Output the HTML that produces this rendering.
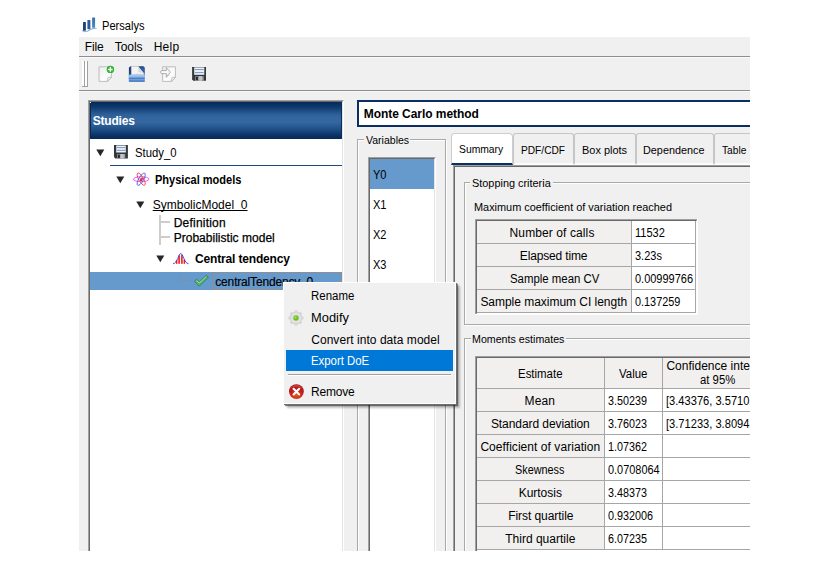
<!DOCTYPE html>
<html>
<head>
<meta charset="utf-8">
<title>Persalys</title>
<style>
html,body{margin:0;padding:0;background:#fff;}
body{width:828px;height:566px;overflow:hidden;position:relative;font-family:"Liberation Sans",sans-serif;}
#app{position:absolute;left:79px;top:0;width:671px;height:551px;overflow:hidden;}
#in{position:absolute;left:-79px;top:0;width:828px;height:566px;}
.a{position:absolute;}
.t{position:absolute;white-space:nowrap;line-height:20px;height:20px;font-family:"Liberation Sans",sans-serif;display:inline-block;transform-origin:0 50%;}
.g{background:#f0f0f0;}
.hl{position:absolute;height:1px;}
.vl{position:absolute;width:1px;}
.cellh{position:absolute;background:#f1f0ef;}
.cellw{position:absolute;background:#fff;}
</style>
</head>
<body>
<div id="app"><div id="in">

<!-- menubar / toolbar / main background -->
<div class="a g" style="left:79px;top:37px;width:671px;height:514px;"></div>
<div class="hl" style="left:79px;top:56px;width:671px;background:#8e8e8e;"></div>
<div class="hl" style="left:79px;top:57px;width:671px;background:#fbfbfb;"></div>
<div class="hl" style="left:79px;top:90px;width:671px;background:#8e8e8e;"></div>
<div class="hl" style="left:79px;top:91px;width:671px;background:#f8f8f8;"></div>

<!-- title icon -->
<svg class="a" style="left:82px;top:16px;" width="18" height="18" viewBox="0 0 18 18">
  <defs>
    <linearGradient id="tb3" x1="0" y1="0" x2="0" y2="1"><stop offset="0" stop-color="#3a6fab"/><stop offset="1" stop-color="#4f88c2"/></linearGradient>
    <linearGradient id="tb2" x1="0" y1="0" x2="0" y2="1"><stop offset="0" stop-color="#2c5d9c"/><stop offset="1" stop-color="#2a5a98"/></linearGradient>
  </defs>
  <path d="M0.2 14.4 L2.6 15.7 L5.4 15.2 L8.6 13.6 L11 12.6 L14.6 12.3" stroke="#8fb4da" stroke-width="1.1" fill="none"/>
  <rect x="1" y="6.1" width="2.9" height="8.6" rx="0.5" fill="#1b447f"/>
  <rect x="5.4" y="3.9" width="3" height="9.3" rx="0.5" fill="url(#tb2)"/>
  <rect x="10.1" y="1.4" width="3" height="10.3" rx="0.5" fill="url(#tb3)"/>
</svg>

<!-- toolbar handle -->
<div class="a" style="left:82px;top:61px;width:2px;height:26px;background:#fff;border-right:1px solid #a0a0a0;border-bottom:1px solid #a0a0a0;box-sizing:border-box;width:3px;"></div>
<div class="a" style="left:85px;top:61px;height:26px;background:#fff;border-right:1px solid #a0a0a0;border-bottom:1px solid #a0a0a0;box-sizing:border-box;width:3px;"></div>

<!-- toolbar icons -->
<!-- new -->
<svg class="a" style="left:97px;top:65px;" width="18" height="18" viewBox="0 0 18 18">
  <defs><linearGradient id="pg" x1="0" y1="0" x2="1" y2="1"><stop offset="0" stop-color="#ececec"/><stop offset="0.6" stop-color="#fdfdfd"/><stop offset="1" stop-color="#f1f1f1"/></linearGradient></defs>
  <path d="M2 1.8 H14.4 V12.4 L10.6 16.4 H2 Z" fill="url(#pg)" stroke="#bdbdbd" stroke-width="1"/>
  <path d="M14.4 12.4 C12.8 12.2 11.4 12.4 10.8 12.8 C10.9 14 10.8 15.2 10.6 16.4 Z" fill="#fafafa" stroke="#b4b4b4" stroke-width="0.9"/>
  <circle cx="13.4" cy="4.4" r="3.7" fill="#1ea81e"/>
  <circle cx="13.4" cy="4.4" r="3.1" fill="none" stroke="#4cc84c" stroke-width="0.6"/>
  <path d="M13.4 2.1 V6.7 M11.1 4.4 H15.7" stroke="#fff" stroke-width="1.5"/>
</svg>
<!-- open -->
<svg class="a" style="left:128px;top:65px;" width="18" height="18" viewBox="0 0 18 18">
  <path d="M0.9 2.4 L2.6 1.3 H15.4 L16.6 2.6 V11 H0.9 Z" fill="#1b3f7c"/>
  <path d="M3.4 1.3 H10 L15.7 8 V11 H3.4 Z" fill="#f4f4f4"/>
  <path d="M3.4 1.3 H10 L15.7 8 V11 H3.4 Z" fill="none" stroke="#cdcdcd" stroke-width="0.7"/>
  <path d="M10 1.3 L10.3 7.3 L15.7 8 Z" fill="#dcdcdc"/>
  <path d="M11.4 2.4 H16.4 V8.2 Z" fill="#2d5fa8"/>
  <path d="M3.4 9.4 L9 8.2 L15.7 9 V11 H3.4 Z" fill="#dfe3ea"/>
  <rect x="0.8" y="9.7" width="16" height="7" rx="0.9" fill="#6f9ed9"/>
  <rect x="0.8" y="9.7" width="16" height="2.1" rx="0.6" fill="#a3c5ec"/>
  <rect x="0.8" y="13" width="16" height="1" fill="#4e80c4"/>
  <rect x="0.8" y="15.6" width="16" height="1.1" rx="0.5" fill="#4376bc"/>
</svg>
<!-- import -->
<svg class="a" style="left:159px;top:65px;" width="18" height="18" viewBox="0 0 18 18">
  <path d="M3.6 1.8 H16.4 V12.4 L12.6 16.4 H3.6 Z" fill="url(#pg)" stroke="#bdbdbd" stroke-width="1"/>
  <path d="M16.4 12.4 C14.8 12.2 13.4 12.4 12.8 12.8 C12.9 14 12.8 15.2 12.6 16.4 Z" fill="#fafafa" stroke="#b4b4b4" stroke-width="0.9"/>
  <path d="M2.4 5.6 H7.4 V2.8 L11.4 7.1 L7.4 11.6 V8.6 H2.4 C1.5 8.6 1.5 5.6 2.4 5.6 Z" fill="#fbfbfb" stroke="#a4a4a4" stroke-width="0.9"/>
  <path d="M6.4 11 L7.6 12.6 L10.4 9.6" fill="none" stroke="#c8c8c8" stroke-width="0.9"/>
</svg>
<!-- save -->
<svg class="a" style="left:190px;top:65px;" width="18" height="18" viewBox="0 0 18 18">
  <path d="M2 1.9 H16 V15.8 H3.4 L2 14.4 Z" fill="#34373a"/>
  <path d="M2.6 2.5 V14.2 L3.7 15.2" stroke="#55595d" stroke-width="0.7" fill="none"/>
  <rect x="4.2" y="2.4" width="10.1" height="7.4" fill="#eef3fa"/>
  <rect x="4.8" y="4" width="8.9" height="1.1" fill="#7d9fcc"/>
  <rect x="4.8" y="7" width="8.9" height="1.1" fill="#7d9fcc"/>
  <rect x="5.2" y="11.2" width="8.5" height="4.6" fill="#9b9fa3"/>
  <rect x="9" y="11.2" width="3" height="4.6" fill="#c2c5c8"/>
  <rect x="5.9" y="11.8" width="2" height="3.3" fill="#26282a"/>
</svg>

<!-- ============ Studies tree panel ============ -->
<div class="a" style="left:88px;top:100px;width:256px;height:460px;background:#fff;box-sizing:border-box;border-left:1px solid #a0a0a0;border-top:1px solid #a0a0a0;border-right:1px solid #fff;"></div>
<div class="a" style="left:89px;top:101px;width:254px;height:460px;background:#fff;box-sizing:border-box;border-left:1px solid #696969;border-top:1px solid #696969;border-right:1px solid #e3e3e3;"></div>
<div class="a" style="left:90px;top:102px;width:252px;height:37px;background:linear-gradient(to bottom,#05295c 0%,#0e376b 13%,#2c5f97 33%,#34679f 43%,#34679f 55%,#1f4e86 74%,#0b3366 90%,#05295c 100%);"></div>
<div class="vl" style="left:90px;top:102px;height:37px;background:#05295c;"></div>
<div class="vl" style="left:341px;top:102px;height:37px;background:#08305f;"></div>
<div class="a" style="left:90px;top:102px;width:1px;height:1px;background:#fff;"></div>
<!-- study underline -->
<div class="hl" style="left:110px;top:165px;width:232px;background:#1c4a80;"></div>

<!-- tree arrows -->
<svg class="a" style="left:96px;top:149px;" width="9" height="8" viewBox="0 0 9 8"><path d="M0.3 0.6 H8.3 L4.3 7.2 Z" fill="#262626"/></svg>
<svg class="a" style="left:116px;top:176px;" width="9" height="8" viewBox="0 0 9 8"><path d="M0.3 0.6 H8.3 L4.3 7.2 Z" fill="#262626"/></svg>
<svg class="a" style="left:136px;top:201px;" width="9" height="8" viewBox="0 0 9 8"><path d="M0.3 0.6 H8.3 L4.3 7.2 Z" fill="#262626"/></svg>
<svg class="a" style="left:156px;top:255px;" width="9" height="8" viewBox="0 0 9 8"><path d="M0.3 0.6 H8.3 L4.3 7.2 Z" fill="#262626"/></svg>

<!-- study floppy icon -->
<svg class="a" style="left:113px;top:144px;" width="16" height="16" viewBox="0 0 16 16">
  <path d="M1 1 H14.9 V14.5 H2.4 L1 13.1 Z" fill="#34373a"/>
  <rect x="3.2" y="1.5" width="9.6" height="7" fill="#eef3fa"/>
  <rect x="3.7" y="3" width="8.6" height="1.1" fill="#7d9fcc"/>
  <rect x="3.7" y="5.8" width="8.6" height="1.1" fill="#7d9fcc"/>
  <rect x="4.2" y="10" width="8" height="4.5" fill="#9b9fa3"/>
  <rect x="7.6" y="10" width="3" height="4.5" fill="#c2c5c8"/>
  <rect x="4.9" y="10.6" width="2" height="3.3" fill="#26282a"/>
</svg>

<!-- atom icon -->
<svg class="a" style="left:132px;top:171px;" width="18" height="17" viewBox="0 0 18 17">
  <g fill="none" stroke-width="0.85">
    <ellipse cx="9.2" cy="8.2" rx="7.7" ry="2.5" stroke="#ee3fe0"/>
    <ellipse cx="9.2" cy="8.2" rx="7" ry="2.4" stroke="#f0405c" transform="rotate(60 9.2 8.2)"/>
    <ellipse cx="9.2" cy="8.2" rx="7" ry="2.4" stroke="#5555f2" transform="rotate(120 9.2 8.2)"/>
  </g>
  <circle cx="8.4" cy="7.6" r="1.2" fill="#7fd8e8"/>
  <circle cx="10" cy="7.6" r="1.2" fill="#e8482a"/>
  <circle cx="9.2" cy="9" r="1.3" fill="#e02a3a"/>
</svg>

<!-- tree branch lines -->
<div class="a" style="left:159.1px;top:215px;width:2px;height:30px;background:#d0cdc9;"></div>
<div class="a" style="left:160px;top:221.2px;width:9.6px;height:1.6px;background:#d0cdc9;"></div>
<div class="a" style="left:160px;top:236.2px;width:9.6px;height:1.6px;background:#d0cdc9;"></div>

<!-- central tendency icon -->
<svg class="a" style="left:172px;top:252px;" width="18" height="14" viewBox="0 0 18 14">
  <g fill="#f21c1c">
    <rect x="3.9" y="8.2" width="1.5" height="3.6"/>
    <rect x="6.3" y="3.4" width="1.6" height="8.4"/>
    <rect x="9.1" y="3" width="1.6" height="8.8"/>
    <rect x="11.6" y="7.6" width="1.5" height="4.2"/>
  </g>
  <path d="M1 11.8 C5.4 11.4 6.6 1.5 8.8 1.5 C11 1.5 12.2 11.4 16.6 11.8" fill="none" stroke="#3c3ce0" stroke-width="0.9"/>
</svg>

<!-- selected row -->
<div class="a" style="left:90px;top:272px;width:252px;height:18px;background:#6699cc;"></div>
<div class="a" style="left:179.5px;top:272px;width:1px;height:9px;background:#7a90b0;"></div>
<div class="a" style="left:179.5px;top:280px;width:10.5px;height:1px;background:#7a90b0;"></div>
<!-- focus rect -->
<div class="a" style="left:212px;top:272px;width:130px;height:18px;box-sizing:border-box;border:1px dotted #b8835a;"></div>
<!-- check icon -->
<svg class="a" style="left:193px;top:274px;" width="17" height="14" viewBox="0 0 17 14">
  <path d="M1.4 7.2 L3.6 5.2 L6.2 7.8 L13.2 1.4 L15.4 3.4 L6.2 12.2 Z" fill="#55b373" stroke="#2f8048" stroke-width="0.8" stroke-linejoin="round"/>
  <path d="M3.6 6.4 L6.2 9 L13.2 2.6" fill="none" stroke="#9fe0b2" stroke-width="0.9"/>
</svg>

<!-- ============ Right panel ============ -->
<div class="a" style="left:357px;top:100px;width:420px;height:27px;box-sizing:border-box;border:2px solid #0a2e64;background:#fff;"></div>

<!-- variables group box -->
<div class="a" style="left:358px;top:140px;width:89px;height:430px;box-sizing:border-box;border:1px solid #fff;"></div>
<div class="a" style="left:357px;top:139px;width:89px;height:430px;box-sizing:border-box;border:1px solid #a9a9a9;"></div>
<div class="a g" style="left:364px;top:134px;width:46px;height:14px;"></div>
<!-- list box -->
<div class="a" style="left:368px;top:157px;width:68px;height:410px;box-sizing:border-box;border-left:1px solid #a0a0a0;border-top:1px solid #a0a0a0;border-right:1px solid #fff;background:#fff;"></div>
<div class="a" style="left:369px;top:158px;width:66px;height:410px;box-sizing:border-box;border-left:1px solid #696969;border-top:1px solid #696969;border-right:1px solid #e3e3e3;background:#fff;"></div>
<div class="a" style="left:370px;top:159px;width:64px;height:30px;background:#6699cc;"></div>

<!-- tab pane -->
<div class="a" style="left:453px;top:165px;width:320px;height:410px;box-sizing:border-box;border-left:1px solid #a0a0a0;border-top:1px solid #a0a0a0;"></div>
<div class="a" style="left:454px;top:166px;width:320px;height:410px;box-sizing:border-box;border-left:1px solid #696969;border-top:1px solid #696969;"></div>

<!-- tabs -->
<div class="a" style="left:513px;top:133px;width:61px;height:32px;box-sizing:border-box;border:1px solid #c6c6c6;border-bottom:2px solid #fbfbfb;border-radius:3px 3px 0 0;background:#f0f0f0;"></div>
<div class="a" style="left:574px;top:133px;width:62px;height:32px;box-sizing:border-box;border:1px solid #c6c6c6;border-bottom:2px solid #fbfbfb;border-radius:3px 3px 0 0;background:#f0f0f0;"></div>
<div class="a" style="left:636px;top:133px;width:78px;height:32px;box-sizing:border-box;border:1px solid #c6c6c6;border-bottom:2px solid #fbfbfb;border-radius:3px 3px 0 0;background:#f0f0f0;"></div>
<div class="a" style="left:714px;top:133px;width:60px;height:32px;box-sizing:border-box;border:1px solid #c6c6c6;border-bottom:2px solid #fbfbfb;border-radius:3px 3px 0 0;background:#f0f0f0;"></div>
<div class="a" style="left:451px;top:133px;width:62px;height:32px;box-sizing:border-box;border:1px solid #cdcdcd;border-bottom:2px solid #0a2e64;border-radius:4px 4px 0 0;background:#fff;"></div>

<!-- stopping criteria group -->
<div class="a" style="left:465px;top:183px;width:320px;height:143px;box-sizing:border-box;border:1px solid #fff;"></div>
<div class="a" style="left:464px;top:182px;width:320px;height:143px;box-sizing:border-box;border:1px solid #a9a9a9;"></div>
<div class="a g" style="left:470px;top:176px;width:83px;height:14px;"></div>

<!-- table 1 -->
<div class="a" style="left:475px;top:219px;width:223px;height:96px;background:#fff;"></div>
<div class="a" style="left:475px;top:219px;width:222px;height:95px;background:#a0a0a0;"></div>
<div class="a" style="left:476px;top:220px;width:220px;height:93px;background:#696969;"></div>
<div class="a" style="left:477px;top:221px;width:219px;height:92px;background:#a6a6a6;"></div>
<div class="a" style="left:696px;top:221px;width:2px;height:94px;background:#fdfdfd;"></div>
<div class="a" style="left:477px;top:313px;width:221px;height:2px;background:#fdfdfd;"></div>
<div class="cellh" style="left:477px;top:221px;width:154px;height:22px;"></div>
<div class="cellh" style="left:477px;top:244px;width:154px;height:22px;"></div>
<div class="cellh" style="left:477px;top:267px;width:154px;height:22px;"></div>
<div class="cellh" style="left:477px;top:290px;width:154px;height:22px;"></div>
<div class="cellw" style="left:632px;top:221px;width:63px;height:22px;"></div>
<div class="cellw" style="left:632px;top:244px;width:63px;height:22px;"></div>
<div class="cellw" style="left:632px;top:267px;width:63px;height:22px;"></div>
<div class="cellw" style="left:632px;top:290px;width:63px;height:22px;"></div>

<!-- moments group -->
<div class="a" style="left:465px;top:339px;width:320px;height:239px;box-sizing:border-box;border:1px solid #fff;"></div>
<div class="a" style="left:464px;top:338px;width:320px;height:239px;box-sizing:border-box;border:1px solid #a9a9a9;"></div>
<div class="a g" style="left:471px;top:331px;width:95px;height:14px;"></div>

<!-- table 2 -->
<div class="a" style="left:475px;top:356px;width:300px;height:210px;background:#a0a0a0;"></div>
<div class="a" style="left:476px;top:357px;width:300px;height:210px;background:#696969;"></div>
<div class="a" style="left:477px;top:358px;width:300px;height:210px;background:#fff;"></div>
<div class="a" style="left:477px;top:358px;width:300px;height:192px;background:#a6a6a6;"></div>
<div class="cellh" style="left:477px;top:358px;width:127px;height:30px;"></div>
<div class="cellh" style="left:605px;top:358px;width:57px;height:30px;"></div>
<div class="cellh" style="left:663px;top:358px;width:112px;height:30px;"></div>
<div class="cellh" style="left:477px;top:389px;width:127px;height:22px;"></div>
<div class="cellw" style="left:605px;top:389px;width:57px;height:22px;"></div>
<div class="cellw" style="left:663px;top:389px;width:112px;height:22px;"></div>
<div class="cellh" style="left:477px;top:412px;width:127px;height:22px;"></div>
<div class="cellw" style="left:605px;top:412px;width:57px;height:22px;"></div>
<div class="cellw" style="left:663px;top:412px;width:112px;height:22px;"></div>
<div class="cellh" style="left:477px;top:435px;width:127px;height:22px;"></div>
<div class="cellw" style="left:605px;top:435px;width:57px;height:22px;"></div>
<div class="cellw" style="left:663px;top:435px;width:112px;height:22px;"></div>
<div class="cellh" style="left:477px;top:458px;width:127px;height:22px;"></div>
<div class="cellw" style="left:605px;top:458px;width:57px;height:22px;"></div>
<div class="cellw" style="left:663px;top:458px;width:112px;height:22px;"></div>
<div class="cellh" style="left:477px;top:481px;width:127px;height:22px;"></div>
<div class="cellw" style="left:605px;top:481px;width:57px;height:22px;"></div>
<div class="cellw" style="left:663px;top:481px;width:112px;height:22px;"></div>
<div class="cellh" style="left:477px;top:504px;width:127px;height:22px;"></div>
<div class="cellw" style="left:605px;top:504px;width:57px;height:22px;"></div>
<div class="cellw" style="left:663px;top:504px;width:112px;height:22px;"></div>
<div class="cellh" style="left:477px;top:527px;width:127px;height:22px;"></div>
<div class="cellw" style="left:605px;top:527px;width:57px;height:22px;"></div>
<div class="cellw" style="left:663px;top:527px;width:112px;height:22px;"></div>

<span class="t" style="left:101.8px;top:16.0px;font-size:12px;font-weight:400;color:#000;transform:scaleX(0.9236);">Persalys</span>
<span class="t" style="left:84.7px;top:37.0px;font-size:12px;font-weight:400;color:#000;letter-spacing:-0.086px;">File</span>
<span class="t" style="left:114.8px;top:37.0px;font-size:12px;font-weight:400;color:#000;letter-spacing:-0.083px;">Tools</span>
<span class="t" style="left:153.7px;top:37.0px;font-size:12px;font-weight:400;color:#000;letter-spacing:0.253px;">Help</span>
<span class="t" style="left:92.8px;top:111.0px;font-size:12px;font-weight:700;color:#fff;letter-spacing:-0.221px;">Studies</span>
<span class="t" style="left:134.9px;top:143.0px;font-size:12px;font-weight:400;color:#000;transform:scaleX(0.9422);">Study_0</span>
<span class="t" style="left:155.0px;top:170.0px;font-size:12px;font-weight:700;color:#000;transform:scaleX(0.9187);">Physical models</span>
<span class="t" style="left:152.7px;top:195.0px;font-size:12px;font-weight:400;color:#000;text-decoration:underline;text-decoration-skip-ink:none;letter-spacing:0.005px;">SymbolicModel  0</span>
<span class="t" style="left:173.7px;top:213.0px;font-size:12px;font-weight:400;color:#000;-webkit-text-stroke:0.25px #000;letter-spacing:0.217px;">Definition</span>
<span class="t" style="left:173.7px;top:228.0px;font-size:12px;font-weight:400;color:#000;-webkit-text-stroke:0.25px #000;letter-spacing:0.020px;">Probabilistic model</span>
<span class="t" style="left:195.1px;top:249.0px;font-size:12px;font-weight:700;color:#000;letter-spacing:-0.172px;">Central tendency</span>
<span class="t" style="left:215.3px;top:272.0px;font-size:12px;font-weight:400;color:#000;-webkit-text-stroke:0.15px #000;letter-spacing:-0.173px;">centralTendency_0</span>
<span class="t" style="left:363.8px;top:104.0px;font-size:12px;font-weight:700;color:#000;letter-spacing:-0.056px;">Monte Carlo method</span>
<span class="t" style="left:365.5px;top:130.0px;font-size:11.5px;font-weight:400;color:#000;transform:scaleX(0.9152);">Variables</span>
<span class="t" style="left:373.1px;top:165.0px;font-size:12.5px;font-weight:400;color:#000;transform:scaleX(0.8825);">Y0</span>
<span class="t" style="left:373.1px;top:195.0px;font-size:12.5px;font-weight:400;color:#000;transform:scaleX(0.8825);">X1</span>
<span class="t" style="left:373.1px;top:225.0px;font-size:12.5px;font-weight:400;color:#000;transform:scaleX(0.8825);">X2</span>
<span class="t" style="left:373.1px;top:255.0px;font-size:12.5px;font-weight:400;color:#000;transform:scaleX(0.8825);">X3</span>
<span class="t" style="left:459.2px;top:139.0px;font-size:11.5px;font-weight:400;color:#000;transform:scaleX(0.8983);">Summary</span>
<span class="t" style="left:520.9px;top:140.0px;font-size:11.5px;font-weight:400;color:#000;transform:scaleX(0.8828);">PDF/CDF</span>
<span class="t" style="left:581.6px;top:140.0px;font-size:11.5px;font-weight:400;color:#000;transform:scaleX(0.9511);">Box plots</span>
<span class="t" style="left:643.1px;top:140.0px;font-size:11.5px;font-weight:400;color:#000;transform:scaleX(0.9428);">Dependence</span>
<span class="t" style="left:722.3px;top:140.0px;font-size:11.5px;font-weight:400;color:#000;transform:scaleX(0.8836);">Table</span>
<span class="t" style="left:471.8px;top:173.0px;font-size:11.5px;font-weight:400;color:#000;transform:scaleX(0.9469);">Stopping criteria</span>
<span class="t" style="left:474.0px;top:197.0px;font-size:11.5px;font-weight:400;color:#000;transform:scaleX(0.9482);">Maximum coefficient of variation reached</span>
<span class="t" style="left:509.6px;top:223.0px;font-size:12px;font-weight:400;color:#000;letter-spacing:0.102px;">Number of calls</span>
<span class="t" style="left:519.8px;top:246.0px;font-size:12px;font-weight:400;color:#000;letter-spacing:-0.148px;">Elapsed time</span>
<span class="t" style="left:509.6px;top:269.0px;font-size:12px;font-weight:400;color:#000;transform:scaleX(0.9506);">Sample mean CV</span>
<span class="t" style="left:480.4px;top:292.0px;font-size:12px;font-weight:400;color:#000;letter-spacing:-0.029px;">Sample maximum CI length</span>
<span class="t" style="left:635.0px;top:223.0px;font-size:12px;font-weight:400;color:#000;transform:scaleX(0.9204);">11532</span>
<span class="t" style="left:635.0px;top:246.0px;font-size:12px;font-weight:400;color:#000;transform:scaleX(0.9162);">3.23s</span>
<span class="t" style="left:635.0px;top:269.0px;font-size:12px;font-weight:400;color:#000;transform:scaleX(0.9147);">0.00999766</span>
<span class="t" style="left:634.9px;top:292.0px;font-size:12px;font-weight:400;color:#000;transform:scaleX(0.9049);">0.137259</span>
<span class="t" style="left:472.2px;top:329.0px;font-size:11.5px;font-weight:400;color:#000;transform:scaleX(0.9268);">Moments estimates</span>
<span class="t" style="left:518.2px;top:364.0px;font-size:12px;font-weight:400;color:#000;transform:scaleX(0.9531);">Estimate</span>
<span class="t" style="left:619.0px;top:364.0px;font-size:12px;font-weight:400;color:#000;transform:scaleX(0.9526);">Value</span>
<span class="t" style="left:666.4px;top:356.0px;font-size:12px;font-weight:400;color:#000;letter-spacing:0.017px;">Confidence interval</span>
<span class="t" style="left:699.8px;top:370.0px;font-size:12px;font-weight:400;color:#000;transform:scaleX(0.9449);">at 95%</span>
<span class="t" style="left:524.6px;top:391.0px;font-size:12px;font-weight:400;color:#000;letter-spacing:0.142px;">Mean</span>
<span class="t" style="left:490.9px;top:414.0px;font-size:12px;font-weight:400;color:#000;letter-spacing:-0.071px;">Standard deviation</span>
<span class="t" style="left:480.4px;top:437.0px;font-size:12px;font-weight:400;color:#000;letter-spacing:0.054px;">Coefficient of variation</span>
<span class="t" style="left:515.2px;top:460.0px;font-size:12px;font-weight:400;color:#000;transform:scaleX(0.9031);">Skewness</span>
<span class="t" style="left:518.7px;top:483.0px;font-size:12px;font-weight:400;color:#000;letter-spacing:-0.020px;">Kurtosis</span>
<span class="t" style="left:508.2px;top:506.0px;font-size:12px;font-weight:400;color:#000;letter-spacing:-0.059px;">First quartile</span>
<span class="t" style="left:505.2px;top:529.0px;font-size:12px;font-weight:400;color:#000;letter-spacing:0.012px;">Third quartile</span>
<span class="t" style="left:607.8px;top:391.0px;font-size:12px;font-weight:400;color:#000;transform:scaleX(0.8988);">3.50239</span>
<span class="t" style="left:607.8px;top:414.0px;font-size:12px;font-weight:400;color:#000;transform:scaleX(0.8988);">3.76023</span>
<span class="t" style="left:607.8px;top:437.0px;font-size:12px;font-weight:400;color:#000;transform:scaleX(0.8988);">1.07362</span>
<span class="t" style="left:607.8px;top:460.0px;font-size:12px;font-weight:400;color:#000;transform:scaleX(0.9095);">0.0708064</span>
<span class="t" style="left:607.8px;top:483.0px;font-size:12px;font-weight:400;color:#000;transform:scaleX(0.8988);">3.48373</span>
<span class="t" style="left:607.8px;top:506.0px;font-size:12px;font-weight:400;color:#000;transform:scaleX(0.9009);">0.932006</span>
<span class="t" style="left:607.8px;top:529.0px;font-size:12px;font-weight:400;color:#000;transform:scaleX(0.8988);">6.07235</span>
<span class="t" style="left:666.4px;top:391.0px;font-size:12px;font-weight:400;color:#000;transform:scaleX(0.9261);">[3.43376, 3.57102]</span>
<span class="t" style="left:666.4px;top:414.0px;font-size:12px;font-weight:400;color:#000;transform:scaleX(0.9261);">[3.71233, 3.80948]</span>

</div></div>

<!-- ============ Context menu (may overflow app) ============ -->
<div class="a" style="left:283px;top:282px;width:173px;height:122px;background:#f0f0f0;box-sizing:border-box;border:1px solid #fff;border-left:1.5px solid #fff;border-top:1.5px solid #fff;box-shadow:1px 1px 0 #6e6e6e, 2px 2px 1px rgba(0,0,0,0.45), 4px 4px 2px rgba(0,0,0,0.25);"></div>
<div class="a" style="left:286px;top:350px;width:167px;height:21px;background:#0078d7;"></div>
<div class="hl" style="left:288px;top:374px;width:163px;background:#a0a0a0;"></div>
<div class="hl" style="left:288px;top:375px;width:163px;background:#fff;"></div>
<!-- modify icon -->
<svg class="a" style="left:287px;top:309px;" width="18" height="18" viewBox="0 0 18 18">
  <g fill="#d6d6d6">
    <circle cx="9" cy="9" r="6.3"/>
    <rect x="7.5" y="1.3" width="3" height="15.4" rx="1"/>
    <rect x="1.3" y="7.5" width="15.4" height="3" ry="1"/>
    <rect x="7.5" y="1.3" width="3" height="15.4" rx="1" transform="rotate(45 9 9)"/>
    <rect x="7.5" y="1.3" width="3" height="15.4" rx="1" transform="rotate(-45 9 9)"/>
  </g>
  <circle cx="9" cy="9" r="4.7" fill="#e9e9e9"/>
  <circle cx="9" cy="9" r="3.6" fill="#dedede"/>
  <circle cx="9" cy="9" r="2.7" fill="#72c022"/>
  <circle cx="8.5" cy="8.4" r="1.1" fill="#a6e060"/>
</svg>
<!-- remove icon -->
<svg class="a" style="left:288px;top:383px;" width="17" height="17" viewBox="0 0 17 17">
  <defs><radialGradient id="rg" cx="0.5" cy="0.75" r="0.7"><stop offset="0" stop-color="#dc5a14"/><stop offset="0.55" stop-color="#c8201c"/><stop offset="1" stop-color="#a81216"/></radialGradient></defs>
  <circle cx="8.4" cy="8.6" r="7.4" fill="url(#rg)"/>
  <path d="M2.6 5.6 A6.4 6.4 0 0 1 14.2 5.6 A9 9 0 0 0 2.6 5.6 Z" fill="#e06a6a" opacity="0.55"/>
  <path d="M5.6 5.8 L11.2 11.4 M11.2 5.8 L5.6 11.4" stroke="#fff" stroke-width="2.1" stroke-linecap="round"/>
</svg>
<span class="t" style="left:311.2px;top:286.0px;font-size:12px;font-weight:400;color:#000;transform:scaleX(0.9546);">Rename</span>
<span class="t" style="left:311.2px;top:308.0px;font-size:12px;font-weight:400;color:#000;transform:scaleX(1.0723);">Modify</span>
<span class="t" style="left:311.2px;top:330.0px;font-size:12px;font-weight:400;color:#000;letter-spacing:0.052px;">Convert into data model</span>
<span class="t" style="left:311.2px;top:351.0px;font-size:12px;font-weight:400;color:#fff;transform:scaleX(0.9485);">Export DoE</span>
<span class="t" style="left:311.1px;top:382.0px;font-size:12px;font-weight:400;color:#000;letter-spacing:-0.215px;">Remove</span>

</body>
</html>
